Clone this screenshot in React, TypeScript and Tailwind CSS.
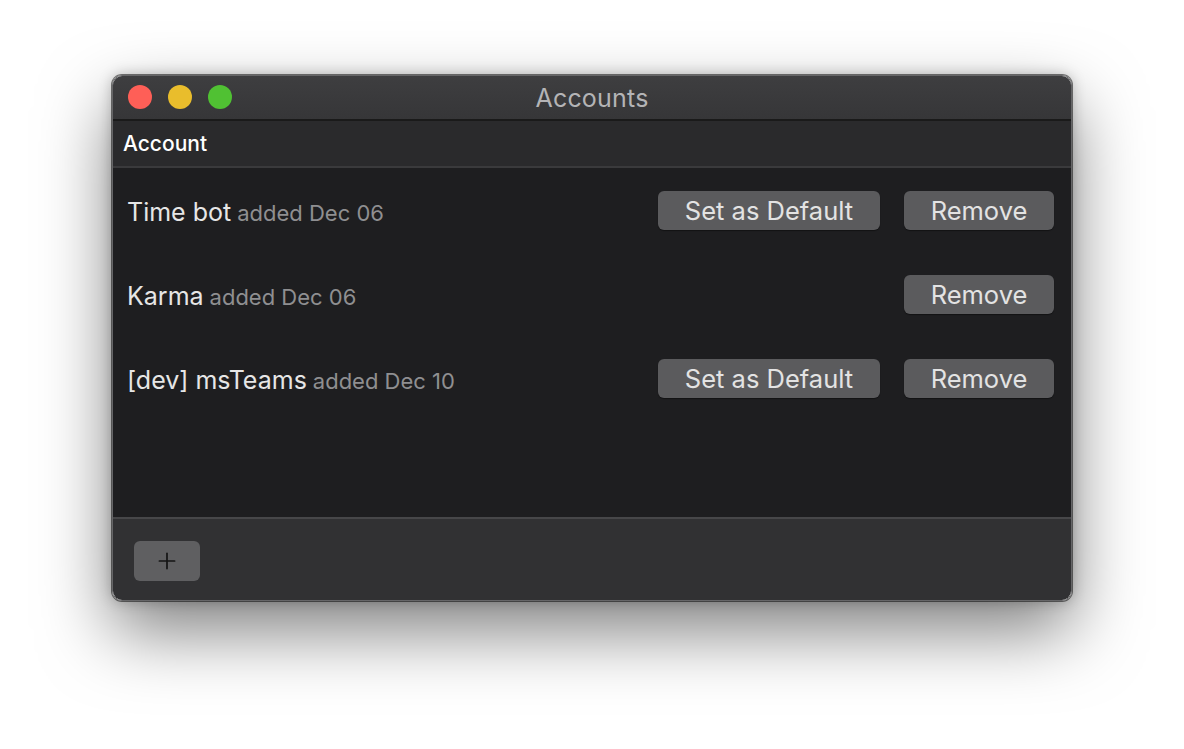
import { Plus } from 'lucide-react';

interface Account {
  name: string;
  added: string;
  canSetDefault: boolean;
}

const accounts: Account[] = [
  { name: 'Time bot', added: 'added Dec 06', canSetDefault: true },
  { name: 'Karma', added: 'added Dec 06', canSetDefault: false },
  { name: '[dev] msTeams', added: 'added Dec 10', canSetDefault: true },
];

function MacButton({ label, width }: { label: string; width: string }) {
  return (
    <button
      className={`${width} flex h-[39px] items-center justify-center rounded-[6px] bg-[#5b5b5d] pt-[2px] text-[25.5px] leading-none text-[#e3e3e3] shadow-[0_1px_1px_rgba(0,0,0,0.4)]`}
    >
      {label}
    </button>
  );
}

export default function App() {
  return (
    <div
      className="flex min-h-[749px] justify-center bg-white pt-[75px]"
      style={{ fontFamily: 'Inter, "Noto Sans", sans-serif' }}
    >
      <div className="flex h-[526px] w-[960px] flex-col overflow-hidden rounded-[10px] border border-[#666668] shadow-[0_30px_70px_rgba(0,0,0,0.5),0_0_14px_rgba(0,0,0,0.25),0_0_0_1px_rgba(0,0,0,0.5)]">
        {/* title bar */}
        <div className="relative flex h-[45px] shrink-0 items-center justify-center border-b-2 border-[#1a1a1a] bg-gradient-to-b from-[#3e3e40] to-[#363638]">
          <div className="absolute left-[15px] top-[9px] flex gap-[16px]">
            <span className="h-[24px] w-[24px] rounded-full bg-[#fe5f57]" />
            <span className="h-[24px] w-[24px] rounded-full bg-[#e9bd2c]" />
            <span className="h-[24px] w-[24px] rounded-full bg-[#50c133]" />
          </div>
          <span className="pt-[2px] text-[25px] tracking-[0.2px] text-[#b4b4b6]">Accounts</span>
        </div>

        {/* column header */}
        <div className="flex h-[47px] shrink-0 items-center border-b-2 border-[#3a3a3c] bg-[#2a2a2c] px-[10px]">
          <span className="text-[21px] font-medium text-white">Account</span>
        </div>

        {/* list */}
        <div className="flex-1 bg-[#1e1e20]">
          {accounts.map((a) => (
            <div key={a.name} className="flex h-[84px] items-center pl-[14px] pr-[17px]">
              <div className="flex flex-1 items-baseline gap-[6px] pt-[6px]">
                <span className="text-[25px] text-[#e6e6e6]">{a.name}</span>
                <span className="text-[22px] text-[#8f8f91]">{a.added}</span>
              </div>
              <div className="flex gap-[24px]">
                {a.canSetDefault && <MacButton label="Set as Default" width="w-[222px]" />}
                <MacButton label="Remove" width="w-[150px]" />
              </div>
            </div>
          ))}
        </div>

        {/* footer */}
        <div className="h-[83px] shrink-0 border-t-2 border-[#474749] bg-[#313133] pl-[21px] pt-[22px]">
          <button className="flex h-[40px] w-[66px] items-center justify-center rounded-[6px] bg-[#5f5f61]">
            <Plus size={26} strokeWidth={1.6} color="#151515" />
          </button>
        </div>
      </div>
    </div>
  );
}
